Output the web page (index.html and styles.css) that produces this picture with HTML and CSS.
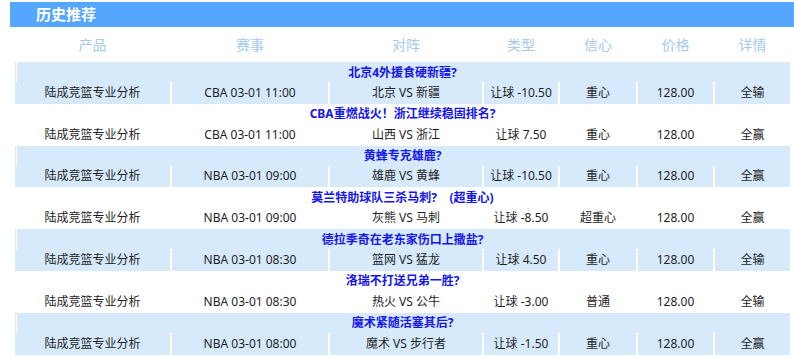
FILE: index.html
```html
<!DOCTYPE html>
<html lang="zh-CN">
<head>
<meta charset="utf-8">
<title>历史推荐</title>
<link rel="stylesheet" href="styles.css">
</head>
<body>
<div class="bar">历史推荐</div>
<div class="head grid">
  <div>产品</div><div>赛事</div><div>对阵</div><div>类型</div><div>信心</div><div>价格</div><div>详情</div>
</div>
<div class="group alt grid">
  <div class="title">北京4外援食硬新疆?</div>
  <div>陆成竞篮专业分析</div><div>CBA 03-01 11:00</div><div>北京 VS 新疆</div><div>让球 -10.50</div><div>重心</div><div>128.00</div><div>全输</div>
</div>
<div class="group grid">
  <div class="title">CBA重燃战火！浙江继续稳固排名?</div>
  <div>陆成竞篮专业分析</div><div>CBA 03-01 11:00</div><div>山西 VS 浙江</div><div>让球 7.50</div><div>重心</div><div>128.00</div><div>全赢</div>
</div>
<div class="group alt grid">
  <div class="title">黄蜂专克雄鹿?</div>
  <div>陆成竞篮专业分析</div><div>NBA 03-01 09:00</div><div>雄鹿 VS 黄蜂</div><div>让球 -10.50</div><div>重心</div><div>128.00</div><div>全赢</div>
</div>
<div class="group grid">
  <div class="title">莫兰特助球队三杀马刺?&nbsp;&nbsp;&nbsp;&nbsp;(超重心)</div>
  <div>陆成竞篮专业分析</div><div>NBA 03-01 09:00</div><div>灰熊 VS 马刺</div><div>让球 -8.50</div><div>超重心</div><div>128.00</div><div>全赢</div>
</div>
<div class="group alt grid">
  <div class="title">德拉季奇在老东家伤口上撒盐?</div>
  <div>陆成竞篮专业分析</div><div>NBA 03-01 08:30</div><div>篮网 VS 猛龙</div><div>让球 4.50</div><div>重心</div><div>128.00</div><div>全输</div>
</div>
<div class="group grid">
  <div class="title">洛瑞不打送兄弟一胜?</div>
  <div>陆成竞篮专业分析</div><div>NBA 03-01 08:30</div><div>热火 VS 公牛</div><div>让球 -3.00</div><div>普通</div><div>128.00</div><div>全输</div>
</div>
<div class="group alt grid">
  <div class="title">魔术紧随活塞其后?</div>
  <div>陆成竞篮专业分析</div><div>NBA 03-01 08:00</div><div>魔术 VS 步行者</div><div>让球 -1.50</div><div>重心</div><div>128.00</div><div>全赢</div>
</div>
</body>
</html>
```
FILE: styles.css
```css
html, body {
  margin: 0;
  padding: 0;
  background: #ffffff;
  overflow: hidden;
}
body {
  font-family: "Noto Sans", "Noto Sans CJK SC", sans-serif;
  width: 794px;
}
.bar {
  margin: 2px 0 0 10px;
  height: 25px;
  line-height: 25px;
  background: #55a6ff;
  color: #ffffff;
  font-size: 15px;
  font-weight: bold;
  padding-left: 26px;
}
.grid {
  display: grid;
  grid-template-columns: 155px 156px 152px 74px 76px 75px 75px;
  column-gap: 2px;
  margin-left: 15px;
  width: 775px;
}
.head {
  height: 35px;
  align-items: center;
  color: #a6c9ef;
  font-size: 14px;
}
.head > div {
  text-align: center;
  line-height: 20px;
}
.group {
  grid-template-rows: 20px 21.8px;
  font-size: 12px;
  color: #1e1e1e;
}
.group > div {
  display: flex;
  align-items: center;
  justify-content: center;
  line-height: 16px;
  white-space: nowrap;
}
.group > .title {
  grid-column: 1 / -1;
  color: #1515f0;
  font-weight: bold;
  padding-top: 1px;
}
.alt > div {
  background: #d6eafc;
}
.alt > .title {
  background: linear-gradient(to right, #d6eafc 1px, #ffffff 1px, #ffffff 2px, #d6eafc 2px);
}
```
